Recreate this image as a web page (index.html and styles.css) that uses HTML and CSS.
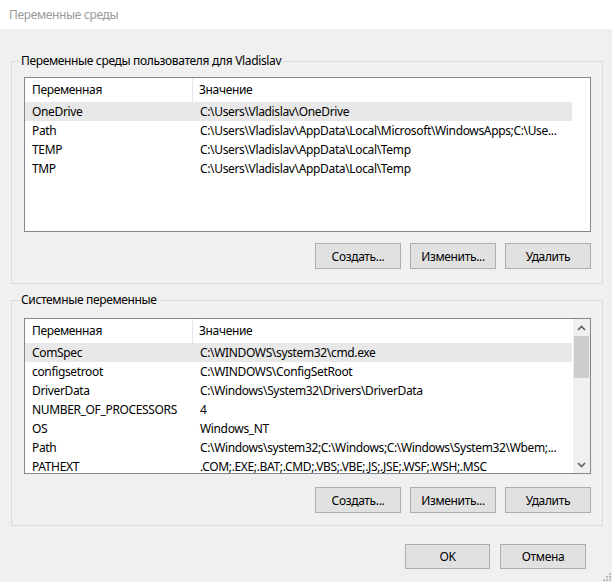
FILE: index.html
```html
<!DOCTYPE html>
<html lang="ru">
<head>
<meta charset="utf-8">
<title>Переменные среды</title>
<link rel="stylesheet" href="styles.css">
</head>
<body>
<div class="window">
  <div class="titlebar">Переменные среды</div>
  <div class="client">
    <fieldset class="group group-user">
      <legend>Переменные среды пользователя для Vladislav</legend>
      <div class="listbox">
        <div class="listview">
          <div class="row head"><div class="c1">Переменная</div><div class="c2">Значение</div></div>
          <div class="row sel"><div class="c1">OneDrive</div><div class="c2">C:\Users\Vladislav\OneDrive</div></div>
          <div class="row"><div class="c1">Path</div><div class="c2">C:\Users\Vladislav\AppData\Local\Microsoft\WindowsApps;C:\Use...</div></div>
          <div class="row"><div class="c1">TEMP</div><div class="c2">C:\Users\Vladislav\AppData\Local\Temp</div></div>
          <div class="row"><div class="c1">TMP</div><div class="c2">C:\Users\Vladislav\AppData\Local\Temp</div></div>
        </div>
      </div>
      <div class="buttons">
        <button class="btn">Создать...</button>
        <button class="btn">Изменить...</button>
        <button class="btn">Удалить</button>
      </div>
    </fieldset>
    <fieldset class="group group-sys">
      <legend>Системные переменные</legend>
      <div class="listbox tall">
        <div class="listview">
          <div class="row head"><div class="c1">Переменная</div><div class="c2">Значение</div></div>
          <div class="row sel"><div class="c1">ComSpec</div><div class="c2">C:\WINDOWS\system32\cmd.exe</div></div>
          <div class="row"><div class="c1">configsetroot</div><div class="c2">C:\WINDOWS\ConfigSetRoot</div></div>
          <div class="row"><div class="c1">DriverData</div><div class="c2">C:\Windows\System32\Drivers\DriverData</div></div>
          <div class="row"><div class="c1">NUMBER_OF_PROCESSORS</div><div class="c2">4</div></div>
          <div class="row"><div class="c1">OS</div><div class="c2">Windows_NT</div></div>
          <div class="row"><div class="c1">Path</div><div class="c2">C:\Windows\system32;C:\Windows;C:\Windows\System32\Wbem;...</div></div>
          <div class="row"><div class="c1">PATHEXT</div><div class="c2">.COM;.EXE;.BAT;.CMD;.VBS;.VBE;.JS;.JSE;.WSF;.WSH;.MSC</div></div>
        </div>
        <div class="scrollbar">
          <div class="arrow"><svg width="9" height="6" viewBox="0 0 9 6"><path d="M1 5 L4.5 1.5 L8 5" fill="none" stroke="#606060" stroke-width="1.6"/></svg></div>
          <div class="track"><div class="thumb"></div></div>
          <div class="arrow"><svg width="9" height="6" viewBox="0 0 9 6"><path d="M1 1 L4.5 4.5 L8 1" fill="none" stroke="#606060" stroke-width="1.6"/></svg></div>
        </div>
      </div>
      <div class="buttons">
        <button class="btn">Создать...</button>
        <button class="btn">Изменить...</button>
        <button class="btn">Удалить</button>
      </div>
    </fieldset>
    <div class="footer">
      <button class="btn ok">OK</button>
      <button class="btn">Отмена</button>
    </div>
  </div>
  <svg class="grip" width="10" height="10" viewBox="0 0 10 10">
    <g fill="#bcbcbc">
      <rect x="8" y="2" width="2" height="2"/>
      <rect x="5" y="5" width="2" height="2"/><rect x="8" y="5" width="2" height="2"/>
      <rect x="2" y="8" width="2" height="2"/><rect x="5" y="8" width="2" height="2"/><rect x="8" y="8" width="2" height="2"/>
    </g>
  </svg>
</div>
</body>
</html>
```
FILE: styles.css
```css
* { box-sizing: border-box; }
html, body { margin: 0; padding: 0; }
body {
  width: 612px;
  height: 582px;
  overflow: hidden;
  background: #f0f0f0;
  font-family: "Noto Sans", "Open Sans", sans-serif;
  font-size: 12px;
  letter-spacing: -0.35px;
  color: #000;
}
.window {
  position: relative;
  width: 612px;
  height: 582px;
  display: flex;
  flex-direction: column;
}
.titlebar {
  height: 29px;
  line-height: 29px;
  background: #fff;
  padding-left: 9px;
  color: #999;
}
.client {
  padding: 24px 9px 0 11px;
  display: flex;
  flex-direction: column;
}
.group {
  margin: 0;
  border: 1px solid #dcdcdc;
  padding: 8px 11px 14px 12px;
  min-width: 0;
}
.group legend {
  padding: 0 1px;
  margin-left: -4px;
  line-height: 16px;
  height: 16px;
}
.group-sys {
  margin-top: 8px;
  padding-top: 10px;
  padding-bottom: 12px;
}
.listbox {
  height: 155px;
  border: 1px solid #828790;
  background: #fff;
  display: flex;
  overflow: hidden;
}
.listbox.tall { height: 156px; }
.listview {
  width: 547px;
  flex: none;
  overflow: hidden;
}
.row {
  display: grid;
  grid-template-columns: 168px 379px;
  height: 19px;
  line-height: 19px;
  white-space: nowrap;
}
.row .c1 { padding-left: 7px; overflow: hidden; }
.row .c2 { padding-left: 7px; overflow: hidden; }
.row.head {
  height: 24px;
  line-height: 24px;
}
.row.head .c1 { border-right: 1px solid #e5e5e5; }
.row.head .c2 { padding-left: 6px; }
.row.sel { background: #e8e8e8; }
.scrollbar {
  width: 17px;
  margin-left: auto;
  background: #f0f0f0;
  display: flex;
  flex-direction: column;
}
.arrow {
  height: 17px;
  display: flex;
  align-items: center;
  justify-content: center;
}
.track { flex: 1; }
.thumb {
  height: 42px;
  margin: 0 1px;
  background: #cdcdcd;
}
.buttons {
  display: flex;
  justify-content: flex-end;
  gap: 9px;
  margin-top: 11px;
}
.group-sys .buttons { margin-top: 13px; }
.btn {
  width: 86px;
  height: 26px;
  margin: 0;
  padding: 0;
  border: 1px solid #adadad;
  background: #e1e1e1;
  font-family: inherit;
  font-size: 12px;
  letter-spacing: inherit;
  color: #000;
}
.footer {
  display: flex;
  justify-content: flex-end;
  gap: 10px;
  margin-top: 18px;
  padding-right: 17px;
}
.footer .btn { height: 25px; }
.footer .ok { width: 85px; }
.grip {
  position: absolute;
  right: 1px;
  bottom: 1px;
}
```
